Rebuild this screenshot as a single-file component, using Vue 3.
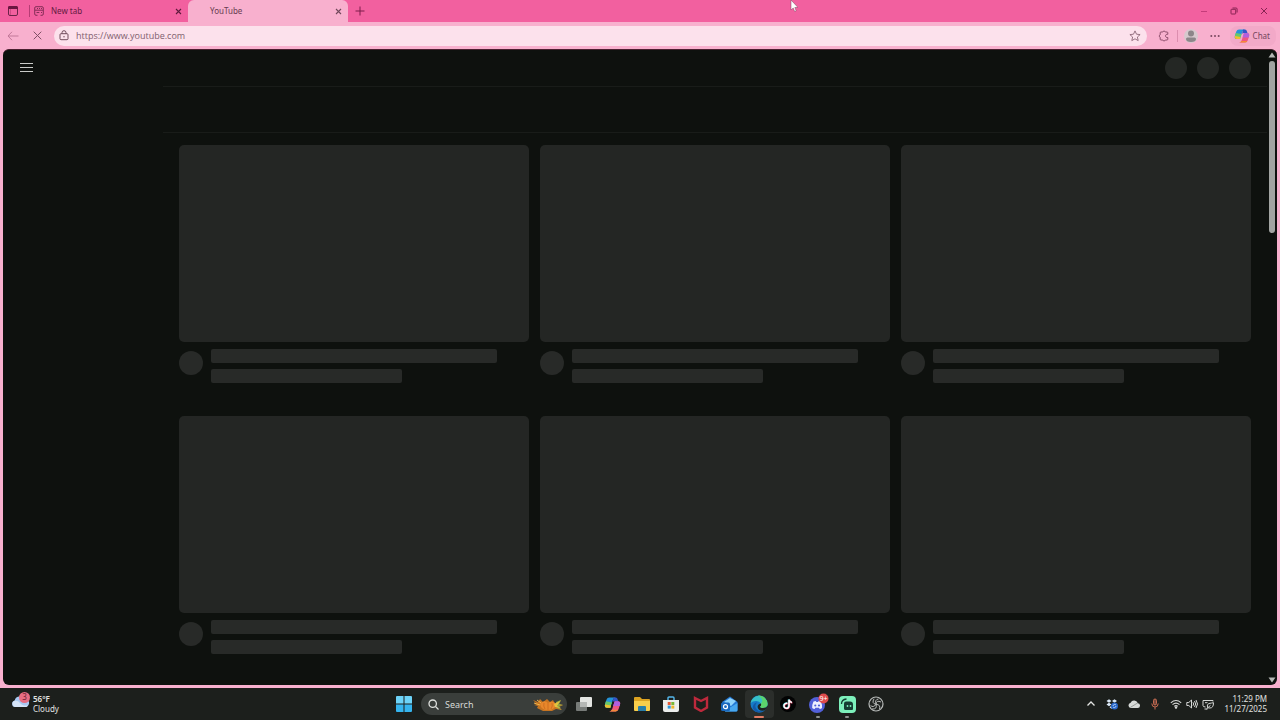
<script setup>
const videos = [1, 2, 3, 4, 5, 6]
</script>

<template>
  <div class="desktop">
    <header class="tabstrip">
      <button class="icon-btn tab-actions" aria-label="Tab actions">
        <svg width="12" height="12" viewBox="0 0 12 12"><rect x="1.5" y="1.5" width="9" height="9" rx="1.5" fill="none" stroke="#6b2348" /><path d="M1 2.2Q1 1 2.5 1h7Q11 1 11 2.5V4H1z" fill="#6b1640" /><path d="M3.5 4v6" stroke="#b83b75" stroke-width=".6" /></svg>
      </button>
      <div class="tab">
        <svg class="favicon" width="10" height="10" viewBox="0 0 10 10" fill="none" stroke="#78284f" stroke-width=".9"><path d="M3.500 9.300H2Q.7 9.300.7 8V2Q.7.700 2 .7h6q1.300 0 1.300 1.300v6q0 1.300-1.300 1.300H6.500" /><path d="M1 4.200h8M3 2.500h1M5 2.500h1M7 2.500h1M2.500 6.500h2.800M7 6.500h1" /></svg>
        <span class="tab-title">New tab</span>
        <button class="icon-btn close" aria-label="Close New tab"><svg width="7" height="7" viewBox="0 0 7 7"><path d="M1 1l5 5M6 1L1 6" stroke="#5e1a3c" stroke-width="1.1" /></svg></button>
      </div>
      <div class="tab active">
        <span class="tab-title">YouTube</span>
        <button class="icon-btn close" aria-label="Close YouTube"><svg width="7" height="7" viewBox="0 0 7 7"><path d="M1 1l5 5M6 1L1 6" stroke="#70485b" stroke-width="1.1" /></svg></button>
      </div>
      <button class="icon-btn new-tab" aria-label="New tab"><svg width="10" height="10" viewBox="0 0 10 10"><path d="M5 .5v9M.5 5h9" stroke="#7c1d4b" /></svg></button>
      <div class="window-buttons">
        <button class="icon-btn" aria-label="Minimize"><svg width="8" height="8" viewBox="0 0 8 8"><path d="M1 4.5h6" stroke="#b83471" stroke-width=".8" /></svg></button>
        <button class="icon-btn" aria-label="Restore"><svg width="8" height="8" viewBox="0 0 8 8" fill="none" stroke="#7c1d4b" stroke-width=".9"><rect x="1" y="2.3" width="4.7" height="4.7" rx=".6" /><path d="M2.5 1h3.6q1 0 1 1v3.5" /></svg></button>
        <button class="icon-btn" aria-label="Close window"><svg width="8" height="8" viewBox="0 0 8 8"><path d="M1 1l6 6M7 1L1 7" stroke="#7c1d4b" stroke-width=".9" /></svg></button>
      </div>
    </header>

    <nav class="toolbar">
      <button class="icon-btn back" aria-label="Back"><svg width="12" height="10" viewBox="0 0 12 10" fill="none" stroke="#c27999"><path d="M5 .8L1 5l4 4.2M1 5h10.500" /></svg></button>
      <button class="icon-btn stop" aria-label="Stop"><svg width="9" height="9" viewBox="0 0 9 9"><path d="M.7 .7l7.600 7.600M8.300 .7L.7 8.300" stroke="#805066" /></svg></button>
      <div class="address">
        <svg width="10" height="11" viewBox="0 0 10 11" fill="none" stroke="#704c5c"><rect x="1" y="3.700" width="8" height="6" rx="1" /><path d="M3 3.700V2.700a2 2 0 0 1 4 0v1" /><circle cx="5" cy="6.700" r=".7" fill="#704c5c" stroke="none" /></svg>
        <input class="url" type="text" aria-label="Address" value="https://www.youtube.com" />
        <button class="icon-btn" aria-label="Add to favorites"><svg width="12" height="12" viewBox="0 0 12 12"><path d="M6 .9l1.500 3.300 3.600.4-2.700 2.400.8 3.600L6 8.800l-3.200 1.800.8-3.600L.9 4.600l3.600-.4z" fill="none" stroke="#8c6677" stroke-width=".9" stroke-linejoin="round" /></svg></button>
      </div>
      <button class="icon-btn extensions" aria-label="Extensions"><svg width="12" height="12" viewBox="0 0 12 12"><path d="M3 2h1.800a1.300 1.300 0 0 1 2.500 0H9q.8 0 .8.800V4.300a1.700 1.700 0 1 0 0 3.200V9.200q0 .8-.8.800H7.300a1.300 1.300 0 0 1-2.500 0H3q-.8 0-.8-.8V7.300a1.300 1.300 0 0 1 0-2.500v-2Q2.200 2 3 2z" fill="none" stroke="#8c4d6b" /></svg></button>
      <span class="divider"></span>
      <button class="icon-btn profile" aria-label="Profile"><svg width="14" height="14" viewBox="0 0 14 14"><circle cx="7" cy="7" r="7" fill="#d6c8cd" /><circle cx="7" cy="4.500" r="3" fill="#8c8589" /><path d="M2 10q0-1.500 1.500-1.500h7Q12 8.500 12 10q0 3-5 3t-5-3z" fill="#8c8589" /></svg></button>
      <button class="icon-btn more" aria-label="Settings and more"><svg width="10" height="4" viewBox="0 0 10 4" fill="#7a4860"><circle cx="1.300" cy="2" r="1" /><circle cx="5" cy="2" r="1" /><circle cx="8.700" cy="2" r="1" /></svg></button>
      <button class="chat">
        <svg width="16" height="16" viewBox="0 0 16 16"><path d="M11 1.500H5Q3 1.500 2.300 3.500L1 7.500Q0 11 3 11h3l2.200-7Q9 1.500 11 1.500z" fill="#2494d8" /><path d="M1.800 5L1 7.500Q0 11 3 11h3l1.500-5z" fill="#69c86b" /><path d="M1 8q-.7 3 2 3h3l.7-2z" fill="#efc02f" /><path d="M5 14.500h6q2 0 2.700-2L15 8.500Q16 5 13 5h-3l-2.200 7Q7 14.500 5 14.500z" fill="#ef5680" /><path d="M9 1.500h2q1.500 0 2 2l.5 1.500H10q-1.500 0-2 1z" fill="#3455c7" /><path d="M14.700 9.500L15 8.500Q16 5 13 5h-3L8.600 9.500z" fill="#b25fdd" /><path d="M5 14.500h6q1.500 0 2.300-1.500H7.400q-1 1.500-2.400 1.500z" fill="#f38b39" /></svg>
        <span>Chat</span>
      </button>
    </nav>

    <main class="page">
      <aside class="guide">
        <button class="icon-btn menu" aria-label="Guide"><svg width="13" height="11" viewBox="0 0 13 11"><path d="M0 1.500h13M0 5.500h13M0 9.500h13" stroke="#c9cbc8" /></svg></button>
      </aside>
      <section class="content">
        <div class="masthead"><span class="dot"></span><span class="dot"></span><span class="dot"></span></div>
        <div class="chips"></div>
        <div class="videos">
          <article v-for="video in videos" :key="video" class="video">
            <div class="thumb"></div>
            <div class="details">
              <div class="avatar"></div>
              <div class="lines"><div class="line"></div><div class="line short"></div></div>
            </div>
          </article>
        </div>
      </section>
      <div class="scrollbar">
        <svg width="8" height="6" viewBox="0 0 8 6"><path d="M4 .5L7.500 5.500h-7z" fill="#b4b6b3" /></svg>
        <div class="track"><div class="handle"></div></div>
        <svg width="8" height="6" viewBox="0 0 8 6"><path d="M4 5.500L7.500 .5h-7z" fill="#b4b6b3" /></svg>
      </div>
    </main>

    <footer class="taskbar">
      <button class="weather">
        <svg width="20" height="20" viewBox="0 0 20 20"><path d="M4 16a3.300 3.300 0 0 1-.3-6.500A5 5 0 0 1 13 8a4 4 0 0 1 2 8z" fill="#a9c9f2" /><path d="M4 16a3.300 3.300 0 0 1-.6-6.200Q7 9 9 12t8 2.500q-1 1.500-2.500 1.500z" fill="#d5e4f8" /><circle cx="13.500" cy="6.500" r="5.500" fill="#e76d83" /><text x="13.500" y="9.300" text-anchor="middle" font-size="8" fill="#6d2435">3</text></svg>
        <span class="weather-text"><span class="temp">56°F</span><span>Cloudy</span></span>
      </button>

      <div class="centre">
        <button class="app start" aria-label="Start"><svg width="16" height="16" viewBox="0 0 16 16"><path d="M0 1q0-1 1-1h6.500v7.500H0zM8.500 0H15q1 0 1 1v6.500H8.500z" fill="#6dd3f8" /><path d="M0 8.500h7.500V16H1q-1 0-1-1zM8.500 8.500H16V15q0 1-1 1H8.500z" fill="#35b4ee" /></svg></button>
        <label class="search">
          <svg width="11" height="11" viewBox="0 0 11 11" fill="none" stroke="#dfe1de" stroke-width="1.300"><circle cx="4.700" cy="4.700" r="3.700" /><path d="M7.500 7.500l3 3" /></svg>
          <input type="text" placeholder="Search" aria-label="Search" />
          <svg width="34" height="16" viewBox="0 0 32 16"><path d="M1 4l5 2 2-3 3 3 4-3 3 3 3-2 2 4 6-4-2 4 4 1-4 2 3 3-6-1-4 2H11L5 12l1-2-4-1 3-1z" fill="#c77421" /><path d="M8 8q4-5 8-1 5-3 8 1-1 6-8 6-7 0-8-6z" fill="#e8872b" /><path d="M12 7q-1 3 1 6M16 7v7M20 7q1 3-1 6" stroke="#cf6f20" fill="none" /><path d="M5 4l4 3M2 7l6 2" stroke="#efb44a" /><path d="M24 6l5-2-2 4 4 1-4 1 2 4-5-3z" fill="#8ca744" /><path d="M22 8l6-3-3 5 4 2-6-1z" fill="#e6c23e" /></svg>
        </label>
        <div class="apps">
          <button class="app" aria-label="Task view"><svg width="18" height="16" viewBox="0 0 18 16"><rect x="1" y="6" width="11" height="9" rx="1" fill="#777b78" /><rect x="5" y="1" width="12" height="10" rx="1" fill="#e3e5e2" /><path d="M5 6h7v5H5z" fill="#b5b8b5" /></svg></button>
          <button class="app" aria-label="Copilot"><svg width="17" height="17" viewBox="0 0 16 16"><path d="M11 1.500H5Q3 1.500 2.300 3.500L1 7.500Q0 11 3 11h3l2.200-7Q9 1.500 11 1.500z" fill="#2494d8" /><path d="M1.800 5L1 7.500Q0 11 3 11h3l1.500-5z" fill="#69c86b" /><path d="M1 8q-.7 3 2 3h3l.7-2z" fill="#efc02f" /><path d="M5 14.500h6q2 0 2.700-2L15 8.500Q16 5 13 5h-3l-2.200 7Q7 14.500 5 14.500z" fill="#ef5680" /><path d="M9 1.500h2q1.500 0 2 2l.5 1.500H10q-1.500 0-2 1z" fill="#3455c7" /><path d="M14.700 9.500L15 8.500Q16 5 13 5h-3L8.600 9.500z" fill="#b25fdd" /><path d="M5 14.500h6q1.500 0 2.300-1.500H7.400q-1 1.500-2.400 1.500z" fill="#f38b39" /><path d="M8.600 5.500L7 10.500" stroke="#1c1f1c" stroke-width="1.200" /></svg></button>
          <button class="app" aria-label="File Explorer"><svg width="18" height="16" viewBox="0 0 18 16"><path d="M1 2q0-1 1-1h5l2 2h7q1 0 1 1v4H1z" fill="#dca321" /><path d="M1 5h16v9q0 1-1 1H2q-1 0-1-1z" fill="#f8ce4b" /><path d="M5 15v-4q0-1 1-1h6q1 0 1 1v4z" fill="#287ea9" /></svg></button>
          <button class="app" aria-label="Microsoft Store"><svg width="16" height="16" viewBox="0 0 16 16"><path d="M5 4V2q0-1 1-1h4q1 0 1 1v2" fill="none" stroke="#54b7ea" stroke-width="1.400" /><path d="M0 4h16v10q0 2-2 2H2q-2 0-2-2z" fill="#eceeec" /><path d="M4.700 6h3v3h-3z" fill="#e65b37" /><path d="M8.300 6h3v3h-3z" fill="#79b837" /><path d="M4.700 9.600h3v3h-3z" fill="#2d97db" /><path d="M8.300 9.600h3v3h-3z" fill="#efb52e" /></svg></button>
          <button class="app" aria-label="McAfee"><svg width="16" height="16" viewBox="0 0 16 16"><path d="M2 2l6 3 6-3v9.500L8 15l-6-3.500z" fill="none" stroke="#bd293c" stroke-width="2.400" /></svg></button>
          <button class="app" aria-label="Outlook"><svg width="17" height="16" viewBox="0 0 17 16"><path d="M1 6l8-5.500L16.500 6v8q0 1.500-1.500 1.500H4z" fill="#2378d4" /><path d="M3 6l6-4 6 3-5 5z" fill="#8fd4fb" /><path d="M5 14l11.500-7v7q0 1.500-1.500 1.500H4z" fill="#47a8ef" /><rect y="6.500" width="9" height="8.500" rx="1.500" fill="#1767bd" /><circle cx="4.500" cy="10.700" r="2" fill="none" stroke="#fff" stroke-width="1.200" /></svg></button>
          <button class="app current" aria-label="Microsoft Edge"><svg width="18" height="18" viewBox="0 0 18 18"><circle cx="9" cy="9" r="8.500" fill="#167bc8" /><path d="M.6 8A8.500 8.500 0 0 1 17.500 9q0 4-4.500 4-3 0-3-1.500 1.500-1 .8-3Q9.500 5.800 6 6 2.500 6.200.6 8z" fill="#37bfc8" /><path d="M8 .6A8.500 8.500 0 0 1 17.500 9q0 4-4.500 4-3 0-3-1.500 1.500-1 .8-3 4-4-2.800-7.900z" fill="#5cd46d" /><path d="M7 7.500q-3 3-.5 6.500T14 15.500Q10 19 5 16.500 1 13 4 9q1-1.300 3-1.500z" fill="#1459a7" /><path d="M10.800 8.500q1 1.800-.8 3 0 1.500 3 1.500 3.500 0 4.300-2-1 4.500-5 4.800Q8 15.500 7.600 12q0-3 3.200-3.500z" fill="#1d2421" /></svg></button>
          <button class="app" aria-label="TikTok"><svg width="18" height="18" viewBox="0 0 18 18" fill="none" stroke-width="1.700"><circle cx="9" cy="9" r="8" fill="#020303" /><path d="M8 8.300a2.500 2.500 0 1 0 1.600 2.400V4.500q.6 2.500 3 2.800" stroke="#3bcbd0" /><path d="M8.800 8.800a2.500 2.500 0 1 0 1.600 2.400V5q.6 2.500 3 2.800" stroke="#df4061" /><path d="M8.400 8.500A2.500 2.500 0 1 0 10 11V4.700q.6 2.500 3 2.800" stroke="#fff" stroke-width="1.500" /></svg></button>
          <button class="app running" aria-label="Discord"><svg width="22" height="22" viewBox="0 0 22 22"><circle cx="10" cy="12" r="8" fill="#5260d9" /><path d="M6.500 8.500L8.800 8l.5 1h1.800l.5-1 2.300.5Q15.500 12 15 15q-1 1-2.300 1l-.7-1.200H8.300L7.700 16q-1.500 0-2.500-1-.4-3 1.300-6.500z" fill="#eff0ff" /><circle cx="8.300" cy="12.500" r="1.100" fill="#5260d9" /><circle cx="12" cy="12.500" r="1.100" fill="#5260d9" /><circle cx="16.500" cy="5.500" r="5" fill="#df4b4c" /><text x="16.500" y="8" text-anchor="middle" font-size="7" fill="#fff">9+</text></svg></button>
          <button class="app running" aria-label="Streamlabs"><svg width="17" height="17" viewBox="0 0 17 17"><rect width="17" height="17" rx="4" fill="#7df0bb" /><path d="M7 5.500h4q3 0 3 3V13q0 1-1 1H6.500Q5 14 5 12.500v-5q0-2 2-2z" fill="#153d32" /><path d="M2.500 8Q2.500 3.500 7.500 3" fill="none" stroke="#153d32" stroke-width="1.300" /><circle cx="8.500" cy="10" r=".9" fill="#7df0bb" /><circle cx="11.500" cy="10" r=".9" fill="#7df0bb" /></svg></button>
          <button class="app" aria-label="OBS Studio"><svg width="16" height="16" viewBox="0 0 16 16" fill="none" stroke="#b7bab8"><circle cx="8" cy="8" r="7" fill="#202321" stroke-width="1.200" /><path d="M6 2.800Q3.300 7.500 8 8.300M13 6Q8.500 3.700 8 8.300M4 13q5.500.5 4-4.700M2.600 9.500q2.600 2.600 5.400-1.200M11.500 13q1.500-4.300-3.500-4.700M10.500 3q-4 .5-2.500 5.300" /></svg></button>
        </div>
      </div>

      <div class="tray">
        <button class="icon-btn" aria-label="Show hidden icons"><svg width="10" height="10" viewBox="0 0 10 10"><path d="M1.500 6.500L5 3l3.500 3.500" fill="none" stroke="#e3e4e2" stroke-width="1.300" /></svg></button>
        <svg width="12" height="12" viewBox="0 0 12 12"><path d="M.5 3L3 1.300 5.500 3 3 4.700zM6 3l2.500-1.700L11 3 8.500 4.700zM.5 6.500L3 4.800l2.500 1.700L3 8.200zM3.500 9.200l2-1.500 2 1.500-2 1.500z" fill="#dce9f7" /><circle cx="8.500" cy="8" r="3.500" fill="#2866c8" /><path d="M7 8a1.700 1.700 0 0 1 3-1M10 8a1.700 1.700 0 0 1-3 1" stroke="#c9dfff" stroke-width=".8" fill="none" /></svg>
        <svg width="12" height="10" viewBox="0 0 12 10"><path d="M2.800 9a2.700 2.700 0 0 1-.2-5.300 3.800 3.800 0 0 1 7.100.5A2.400 2.400 0 0 1 9.500 9z" fill="#d7dad8" /><path d="M2.500 8.300L9.500 4" stroke="#979c98" /></svg>
        <svg width="10" height="12" viewBox="0 0 8 12" fill="none" stroke="#c66b51"><rect x="2.500" y="1" width="3" height="6" rx="1.500" fill="#77483c" /><path d="M.8 5.500q0 3.500 3.200 3.500t3.200-3.500M4 9v2.500" /></svg>
        <button class="status" aria-label="Network, volume and power">
          <svg width="12" height="10" viewBox="0 0 12 10" fill="none" stroke="#d6d8d6" stroke-width="1.100"><path d="M.8 3.800q5.200-4.600 10.400 0M2.500 5.600q3.500-3 7 0M4.200 7.300q1.800-1.500 3.600 0" /><circle cx="6" cy="8.500" r=".7" fill="#d6d8d6" /></svg>
          <svg width="12" height="10" viewBox="0 0 12 10" fill="none" stroke="#d6d8d6"><path d="M.8 3.500h2L5.500 1v8L2.800 6.500h-2zM7 3.300q1.300 1.700 0 3.400M8.500 2q2.300 3 0 6M10 1q3 4 0 8" /></svg>
          <svg width="12" height="11" viewBox="0 0 12 11" fill="none" stroke="#d6d8d6"><path d="M11 2.500V1.500H1v5q0 1.500 2.500 1.500M3 3.700h2.500M2.500 10h3" /><path d="M5.500 8.500Q4.500 5 7 4.500t4.500-.8q0 5.300-3.500 5.300-1.800 0-2.500-.5zM4.500 10l4-3.700" /></svg>
        </button>
        <button class="clock"><span>11:29 PM</span><span>11/27/2025</span></button>
      </div>
    </footer>

    <svg class="cursor" width="8" height="12" viewBox="0 0 8 12"><path d="M1 0v10l2.200-2 1.500 3.500 1.500-.7L4.800 7.500H8z" fill="#fff" stroke="#804060" stroke-width=".5" /></svg>
  </div>
</template>

<style>
body { margin: 0; background: #f8b0ce; }
</style>

<style scoped>
* { box-sizing: border-box; }
.desktop {
  display: flex;
  flex-direction: column;
  height: 100vh;
  overflow: hidden;
  position: relative;
  background: #f8b0ce;
  font-family: "Noto Sans", "Open Sans", sans-serif;
  font-size: 8px;
}
svg { display: block; flex: none; }
button { border: 0; padding: 0; background: none; color: inherit; font: inherit; }
input { border: 0; padding: 0; background: none; outline: 0; font: inherit; min-width: 0; }
.icon-btn { display: grid; place-items: center; flex: none; }

.tabstrip { display: flex; flex: none; height: 22px; background: #f2609f; color: #631b40; }
.tab-actions { width: 26px; }
.tab { display: flex; align-items: center; width: 162px; padding: 0 6px 0 3px; }
.tab:not(.active)::before { content: ""; height: 12px; border-left: 1px solid #b73c75; margin-right: 4px; }
.favicon { margin-right: 7px; }
.tab-title { flex: 1; line-height: 20px; }
.close { width: 8px; height: 20px; }
.tab.active { width: 160px; padding-left: 22px; background: #f8b0ce; border-radius: 6px 6px 0 0; color: #673c50; }
.new-tab { width: 24px; height: 21px; }
.window-buttons { display: flex; height: 22px; margin-left: auto; padding-right: 1px; }
.window-buttons .icon-btn { width: 30px; }

.toolbar { display: flex; align-items: center; flex: none; height: 27px; padding-right: 4px; }
.back { width: 26px; }
.stop { width: 22px; }
.address { display: flex; align-items: center; flex: 1; height: 20px; margin: 0 4px 0 6px; padding: 0 6px 0 5px; border-radius: 10px; background: #fce1ec; }
.url { flex: 1; margin-left: 7px; font-family: "Open Sans", "Noto Sans", sans-serif; font-size: 9px; color: #80606e; }
.extensions { width: 26px; }
.divider { height: 12px; border-left: 1px solid #dc8eaf; }
.profile { width: 26px; }
.more { width: 22px; margin-right: 4px; }
.chat { display: flex; align-items: center; gap: 3px; height: 20px; padding: 0 6px 0 4px; border-radius: 8px; background: #f2a9c8; color: #74465c; }

.page { display: flex; flex: 1; min-height: 0; margin: 0 3px 3px; overflow: hidden; border: solid #49202f; border-width: 1px 0 0; border-radius: 6px; background: #0e110e; }
.guide { flex: none; width: 160px; }
.menu { width: 47px; height: 35px; }
.content { flex: 1; min-width: 0; }
.masthead { display: flex; align-items: center; justify-content: flex-end; gap: 10px; height: 37px; padding-right: 16px; border-bottom: 1px solid #191c19; }
.dot { width: 22px; height: 22px; border-radius: 50%; background: #242724; }
.chips { height: 46px; border-bottom: 1px solid #191c19; }
.videos { display: grid; grid-template-columns: repeat(3, 1fr); gap: 33px 11px; padding: 12px 16px 0; }
.thumb { aspect-ratio: 16 / 9; border-radius: 5px; background: #242624; }
.details { display: flex; gap: 8px; margin-top: 7px; }
.avatar { width: 24px; height: 24px; margin-top: 2px; border-radius: 50%; background: #282a28; }
.lines { display: flex; flex-direction: column; flex: 1; gap: 6px; }
.line { width: 90%; height: 14px; border-radius: 2px; background: #282a28; }
.line.short { width: 60%; }
.scrollbar { display: flex; flex-direction: column; align-items: center; flex: none; width: 10px; padding: 2px 0; }
.track { flex: 1; padding-top: 3px; }
.handle { width: 6px; height: 28%; border-radius: 3px; background: #a2a4a2; }

.taskbar { display: grid; grid-template-columns: 1fr auto 1fr; flex: none; height: 32px; background: #1c1f1c; color: #e1e3e1; }
.weather { display: flex; align-items: center; justify-self: start; gap: 2px; margin-left: 11px; text-align: left; }
.weather svg { margin-top: -6px; }
.weather-text, .clock { display: flex; flex-direction: column; line-height: 10px; }
.temp { font-weight: 600; }
.centre { display: flex; align-items: center; gap: 2px; }
.app { display: grid; place-items: center; position: relative; flex: 1; height: 28px; border-radius: 4px; }
.start { flex: none; width: 30px; }
.search { display: flex; align-items: center; width: 146px; height: 22px; padding: 0 2px 0 7px; border-radius: 11px; background: #3a3e3b; }
.search input { flex: 1; margin-left: 6px; font-size: 9px; }
.search input::placeholder { color: #d7dad7; opacity: 1; }
.apps { display: flex; width: 322px; }
.current { background: #2b2e2b; }
.current::after, .running::after { content: ""; position: absolute; bottom: 0; left: 50%; width: 10px; height: 2px; border-radius: 1px; background: #e17b63; transform: translateX(-50%); }
.running::after { width: 4px; background: #8d918e; }
.tray { display: flex; align-items: center; justify-self: end; gap: 10px; padding-right: 13px; }
.status { display: flex; align-items: center; gap: 4px; }
.clock { align-items: flex-end; }
.cursor { position: absolute; left: 790px; top: 0; }
</style>
